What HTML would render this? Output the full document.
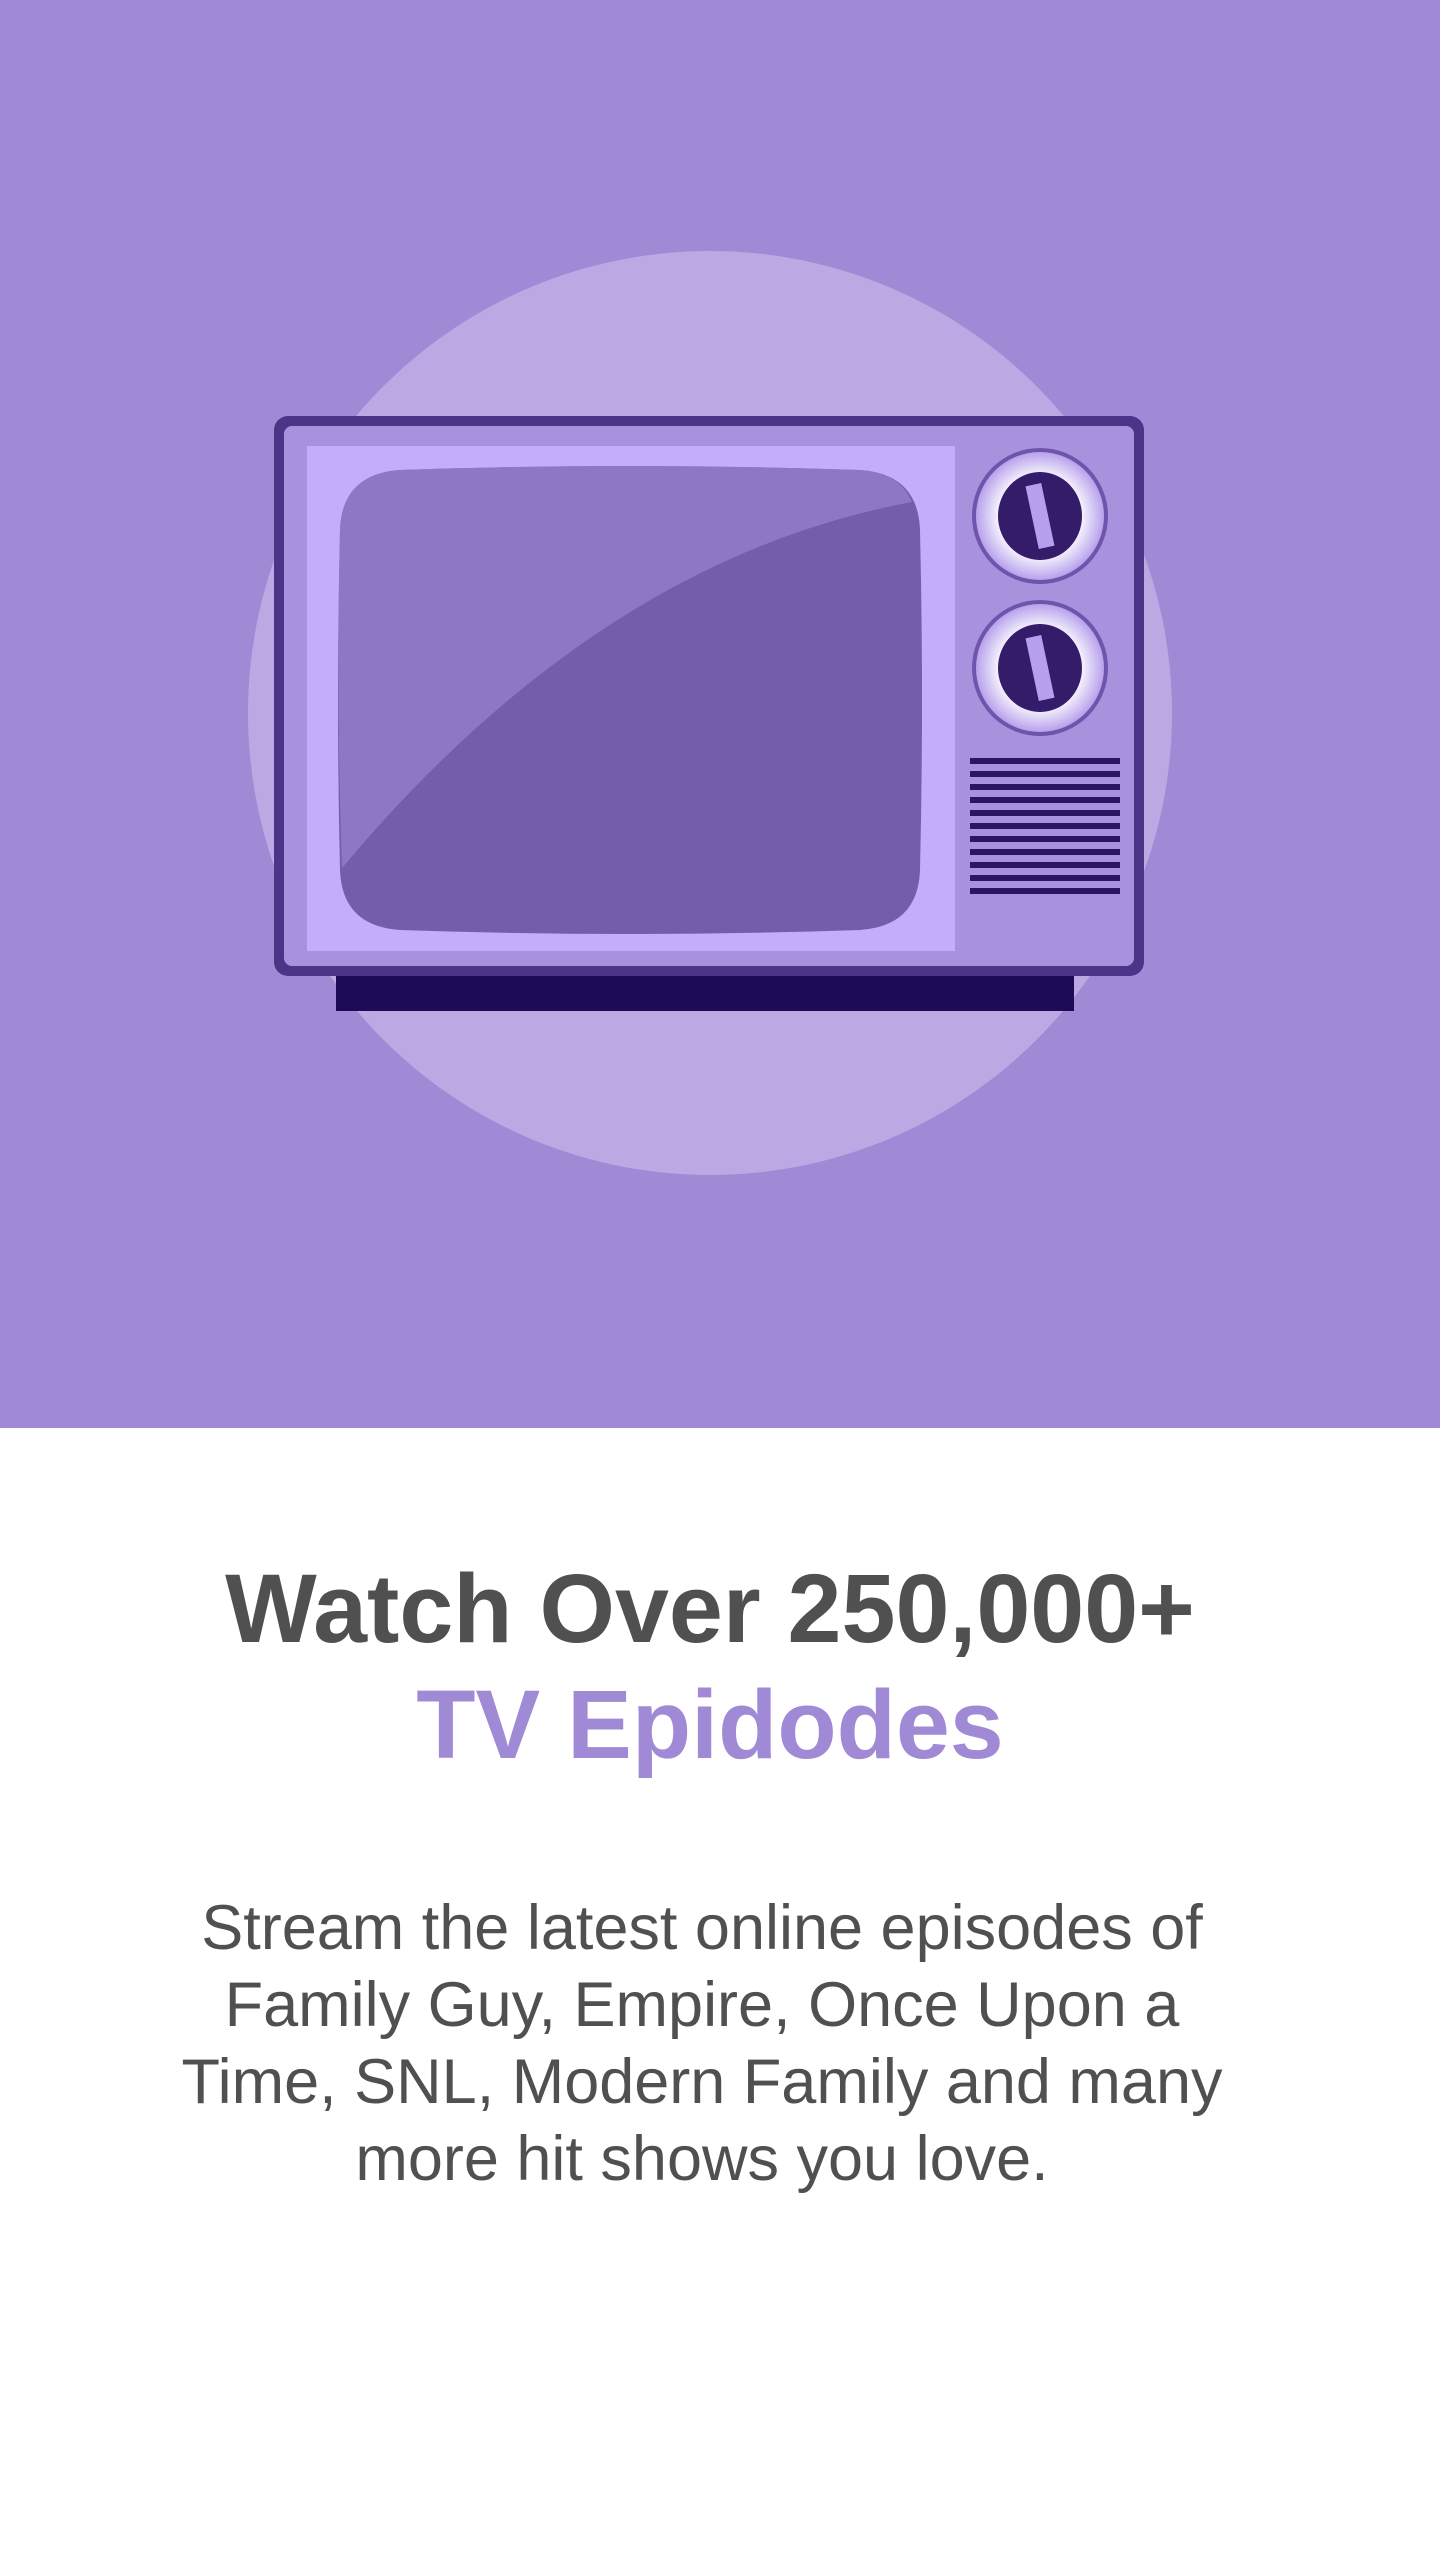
<!DOCTYPE html>
<html><head><meta charset="utf-8"><style>
html,body{margin:0;padding:0;width:1440px;height:2560px;background:#fff;overflow:hidden}
.top{position:absolute;left:0;top:0;width:1440px;height:1428px;background:#a08ad6}
.h{position:absolute;left:-10px;width:1440px;text-align:center;font-family:"Liberation Sans",sans-serif;font-weight:bold;font-size:97px;color:#505050;line-height:118px}
.p{position:absolute;left:-18px;top:1890px;width:1440px;text-align:center;font-family:"Liberation Sans",sans-serif;font-size:63px;color:#505050;line-height:77px}
</style></head><body>
<div class="top">
<svg width="1440" height="1428" viewBox="0 0 1440 1428">
<defs>
<radialGradient id="kn"><stop offset="0.6" stop-color="#ffffff"/><stop offset="1" stop-color="#b7a1ec"/></radialGradient>
</defs>
<circle cx="710" cy="713" r="462" fill="#bba9e4"/>
<rect x="336" y="975" width="738" height="36" fill="#1e0b55"/>
<rect x="274" y="416" width="870" height="560" rx="14" fill="#4b3588"/>
<rect x="284" y="426" width="850" height="540" rx="8" fill="#a892de"/>
<rect x="307" y="446" width="648" height="505" fill="#c4aefa"/>
<path d="M400 470 Q630 462 860 470 Q918 474 920 530 Q924 700 920 870 Q918 926 860 930 Q630 938 400 930 Q342 926 340 870 Q336 700 340 530 Q342 474 400 470 Z" fill="#745eab"/>
<path d="M400 470 Q630 462 860 470 Q900 473 912 502 Q600 560 342 868 Q336 700 340 530 Q342 474 400 470 Z" fill="#9682cd" opacity="0.75"/>
<g transform="translate(1040,516)"><ellipse rx="68" ry="68" fill="#6d55ad"/><ellipse rx="64" ry="64" fill="url(#kn)"/><ellipse rx="42" ry="44" fill="#351c6a"/><rect x="-8" y="-32" width="16" height="64" fill="#b6a0ec" transform="rotate(-12)"/></g>
<g transform="translate(1040,668)"><ellipse rx="68" ry="68" fill="#6d55ad"/><ellipse rx="64" ry="64" fill="url(#kn)"/><ellipse rx="42" ry="44" fill="#351c6a"/><rect x="-8" y="-32" width="16" height="64" fill="#b6a0ec" transform="rotate(-12)"/></g>
<g fill="#2c1662">
<rect x="970" y="758" width="150" height="6"/><rect x="970" y="771" width="150" height="6"/><rect x="970" y="784" width="150" height="6"/><rect x="970" y="797" width="150" height="6"/><rect x="970" y="810" width="150" height="6"/><rect x="970" y="823" width="150" height="6"/><rect x="970" y="836" width="150" height="6"/><rect x="970" y="849" width="150" height="6"/><rect x="970" y="862" width="150" height="6"/><rect x="970" y="875" width="150" height="6"/><rect x="970" y="888" width="150" height="6"/>
</g>
</svg>
</div>
<div class="h" style="top:1550px">Watch Over 250,000+</div>
<div class="h" style="top:1666px;color:#a08ad6">TV Epidodes</div>
<div class="p">Stream the latest online episodes of<br>Family Guy, Empire, Once Upon a<br>Time, SNL, Modern Family and many<br>more hit shows you love.</div>
</body></html>
